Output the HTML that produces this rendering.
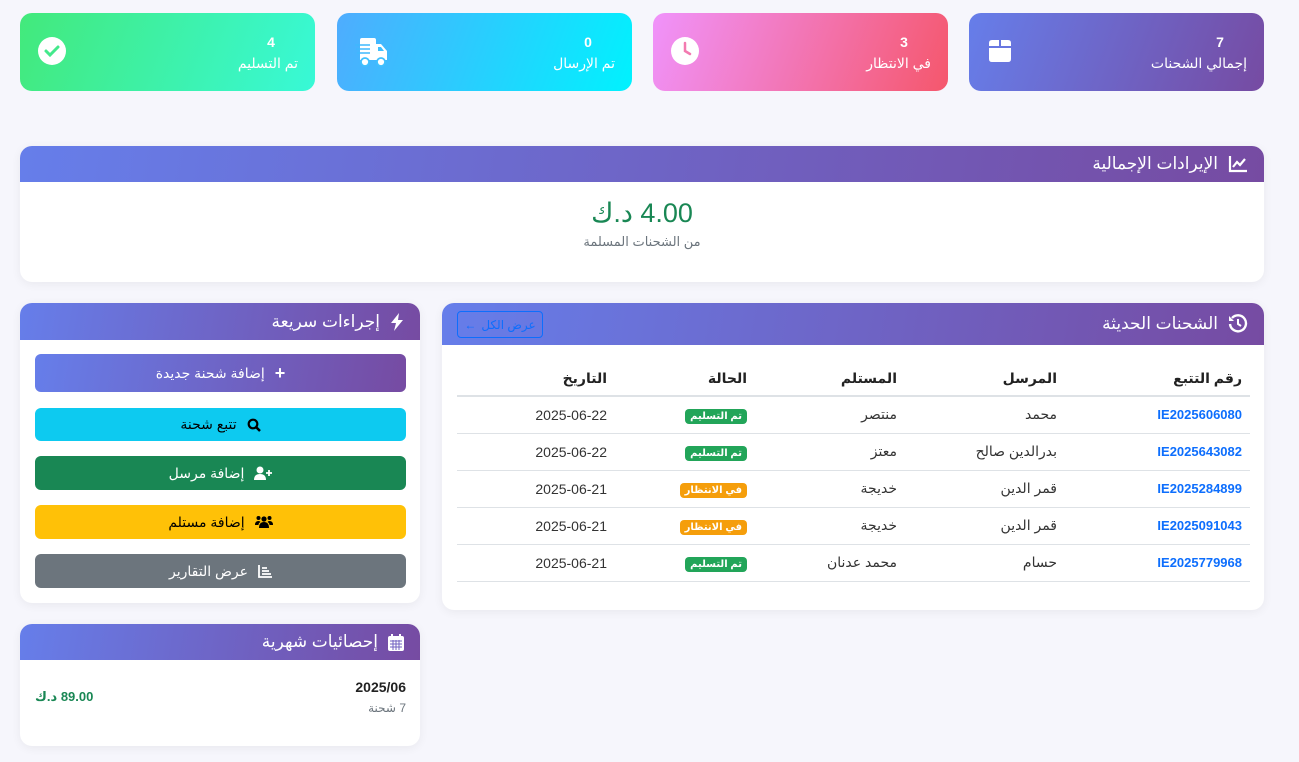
<!DOCTYPE html>
<html dir="rtl"><head><meta charset="utf-8"><style>
*{box-sizing:border-box;margin:0;padding:0}
body{width:1299px;height:762px;background:#f6f6fc;font-family:"Liberation Sans","DejaVu Sans",sans-serif;position:relative;overflow:hidden;color:#222}
.abs{position:absolute}
.stat{position:absolute;top:13px;width:295px;height:78px;border-radius:12px;color:#fff}
.stat .n{position:absolute;right:44px;top:21px;font-size:14px;font-weight:bold;text-align:center;width:40px;margin-right:-20px}
.stat .l{position:absolute;right:17px;top:42px;font-size:14px}
.stat svg{position:absolute;left:17px;top:23px}
.card{position:absolute;background:#fff;border-radius:12px;box-shadow:0 2px 10px rgba(0,0,0,.06);overflow:hidden}
.hd{background:linear-gradient(100deg,#667eea,#764ba2);color:#fff;font-size:17px;display:flex;align-items:center;padding-right:16px;gap:10px}
.btn{position:absolute;left:15px;width:371px;border-radius:6px;font-size:14px;display:flex;align-items:center;justify-content:center;gap:10px}
table{position:absolute;left:15px;top:58px;width:793px;border-collapse:collapse;font-size:14px}
th{font-weight:bold;text-align:right;height:35px;border-bottom:2px solid #dee2e6;padding-right:8px;font-size:14px}
td{height:37px;border-bottom:1px solid #dee2e6;padding-right:8px;color:#333}
td.t{color:#0d6efd;font-weight:bold;font-size:13px}
.b{display:inline-block;color:#fff;font-size:10px;font-weight:bold;padding:2px 5px;border-radius:4px}
.y{background:#f59e0b}
.g{background:#22a559}
</style></head><body>

<div class="stat" style="left:969px;background:linear-gradient(110deg,#667eea,#764ba2)">
<div class="n">7</div><div class="l">إجمالي الشحنات</div>
<svg width="28" height="28" viewBox="0 0 28 28"><path d="M3 10 L3 7 Q3 4 6 4 H13 V10Z M15 4 H22 Q25 4 25 7 V10 H15Z M3 12 H25 V23 Q25 26 22 26 H6 Q3 26 3 23Z" fill="#fff"/></svg></div>

<div class="stat" style="left:653px;background:linear-gradient(110deg,#f093fb,#f5576c)">
<div class="n">3</div><div class="l">في الانتظار</div>
<svg width="30" height="30" viewBox="0 0 30 30"><circle cx="15" cy="15" r="14" fill="#fff"/><path d="M15 7 V15 L20 18" stroke="#f37ab0" stroke-width="2.5" fill="none" stroke-linecap="round"/></svg></div>

<div class="stat" style="left:337px;background:linear-gradient(110deg,#4facfe,#00f2fe)">
<div class="n">0</div><div class="l">تم الإرسال</div>
<svg width="36" height="32" viewBox="0 0 36 32"><path d="M6 4 Q6 2 8 2 H20 Q22 2 22 4 V8 H27 L33 15 V24 H6Z" fill="#fff"/><circle cx="11" cy="26" r="4" fill="#fff" stroke="#3fc0fe" stroke-width="1.8"/><circle cx="27" cy="26" r="4" fill="#fff" stroke="#3fc0fe" stroke-width="1.8"/><path d="M24 11H27L30 15H24Z" fill="#3fc0fe"/><path d="M1 9H16M2 13H16M3 17H16" stroke="#3fb8fe" stroke-width="1.6"/></svg></div>

<div class="stat" style="left:20px;background:linear-gradient(110deg,#43e97b,#38f9d7)">
<div class="n">4</div><div class="l">تم التسليم</div>
<svg width="30" height="30" viewBox="0 0 30 30"><circle cx="15" cy="15" r="14" fill="#fff"/><path d="M9 15 L13 19 L21 11" stroke="#43e98b" stroke-width="3" fill="none" stroke-linecap="round"/></svg></div>

<div class="card" style="left:20px;top:146px;width:1244px;height:136px">
<div class="hd" style="height:36px"><svg width="20" height="18" viewBox="0 0 20 18"><path d="M2 1V16H19" stroke="#fff" stroke-width="2.2" fill="none"/><path d="M5 12L9 7L12 10L17 4" stroke="#fff" stroke-width="2.2" fill="none"/></svg><span>الإيرادات الإجمالية</span></div>
<div class="abs" style="left:0;right:0;top:52px;text-align:center;font-size:27px;color:#198754">4.00 د.ك</div>
<div class="abs" style="left:0;right:0;top:88px;text-align:center;font-size:13px;color:#6c757d">من الشحنات المسلمة</div>
</div>

<div class="card" style="left:20px;top:303px;width:400px;height:300px">
<div class="hd" style="height:37px"><svg width="14" height="18" viewBox="0 0 14 18"><path d="M9 0 L1 10 H6 L4 18 L13 7 H8Z" fill="#fff"/></svg><span>إجراءات سريعة</span></div>
<div class="btn" style="top:51px;height:38px;background:linear-gradient(100deg,#667eea,#764ba2);color:#fff"><b style="font-size:18px">+</b><span>إضافة شحنة جديدة</span></div>
<div class="btn" style="top:105px;height:33px;background:#0dcaf0;color:#000"><svg width="14" height="14" viewBox="0 0 14 14"><circle cx="6" cy="6" r="4.3" stroke="#000" stroke-width="2.2" fill="none"/><path d="M9 9L13 13" stroke="#000" stroke-width="2.5"/></svg><span>تتبع شحنة</span></div>
<div class="btn" style="top:153px;height:34px;background:#198754;color:#fff"><svg width="18" height="14" viewBox="0 0 18 14"><circle cx="6" cy="4" r="3.5" fill="#fff"/><path d="M0 14Q0 8 6 8Q12 8 12 14Z" fill="#fff"/><path d="M15 4V10M12 7H18" stroke="#fff" stroke-width="1.8"/></svg><span>إضافة مرسل</span></div>
<div class="btn" style="top:202px;height:34px;background:#ffc107;color:#000"><svg width="18" height="14" viewBox="0 0 18 14"><circle cx="9" cy="4" r="2.6"/><circle cx="3.5" cy="3" r="2"/><circle cx="14.5" cy="3" r="2"/><path d="M4 13Q4 7 9 7Q14 7 14 13Z M0 10Q0 6 3.5 6Q5 6 5.5 7Q3.5 8 3.5 10Z M18 10Q18 6 14.5 6Q13 6 12.5 7Q14.5 8 14.5 10Z"/></svg><span>إضافة مستلم</span></div>
<div class="btn" style="top:251px;height:34px;background:#6c757d;color:#fff"><svg width="14" height="13" viewBox="0 0 14 13"><path d="M1 0V12H14M4 3H9M4 6H11M4 9H13" stroke="#fff" stroke-width="1.8" fill="none"/></svg><span>عرض التقارير</span></div>
</div>

<div class="card" style="left:442px;top:303px;width:822px;height:307px">
<div class="hd" style="height:42px;position:relative"><svg width="20" height="20" viewBox="0 0 20 20"><path d="M4 4A8 8 0 1 1 2 10" stroke="#fff" stroke-width="2.4" fill="none"/><path d="M1 2V7H6Z" fill="#fff"/><path d="M10 5V10L13 12" stroke="#fff" stroke-width="2" fill="none"/></svg><span>الشحنات الحديثة</span>
<div class="abs" style="left:15px;top:8px;width:86px;height:27px;border:1px solid #0d6efd;border-radius:4px;color:#0d6efd;font-size:12px;display:flex;align-items:center;justify-content:center;gap:5px">عرض الكل <b>←</b></div></div>
<table>
<tr><th style="width:185px">رقم التتبع</th><th style="width:160px">المرسل</th><th style="width:150px">المستلم</th><th style="width:140px">الحالة</th><th>التاريخ</th></tr>
<tr><td class="t">IE2025606080</td><td>محمد</td><td>منتصر</td><td><span class="b g">تم التسليم</span></td><td>2025-06-22</td></tr>
<tr><td class="t">IE2025643082</td><td>بدرالدين صالح</td><td>معتز</td><td><span class="b g">تم التسليم</span></td><td>2025-06-22</td></tr>
<tr><td class="t">IE2025284899</td><td>قمر الدين</td><td>خديجة</td><td><span class="b y">في الانتظار</span></td><td>2025-06-21</td></tr>
<tr><td class="t">IE2025091043</td><td>قمر الدين</td><td>خديجة</td><td><span class="b y">في الانتظار</span></td><td>2025-06-21</td></tr>
<tr><td class="t">IE2025779968</td><td>حسام</td><td>محمد عدنان</td><td><span class="b g">تم التسليم</span></td><td>2025-06-21</td></tr>
</table>
</div>

<div class="card" style="left:20px;top:624px;width:400px;height:122px">
<div class="hd" style="height:36px"><svg width="16" height="17" viewBox="0 0 16 17"><rect x="0" y="2" width="16" height="15" rx="2" fill="#fff"/><rect x="3" y="0" width="2" height="4" fill="#fff"/><rect x="11" y="0" width="2" height="4" fill="#fff"/><path d="M2 7H14M2 10H14M2 13H14M5 6V16M8 6V16M11 6V16" stroke="#7060c0" stroke-width="1"/></svg><span>إحصائيات شهرية</span></div>
<div class="abs" style="right:14px;top:55px;font-size:14px;font-weight:bold">2025/06</div>
<div class="abs" style="right:14px;top:77px;font-size:12px;color:#6c757d">7 شحنة</div>
<div class="abs" style="left:15px;top:65px;font-size:13px;font-weight:bold;color:#198754">89.00 د.ك</div>
</div>
</body></html>
